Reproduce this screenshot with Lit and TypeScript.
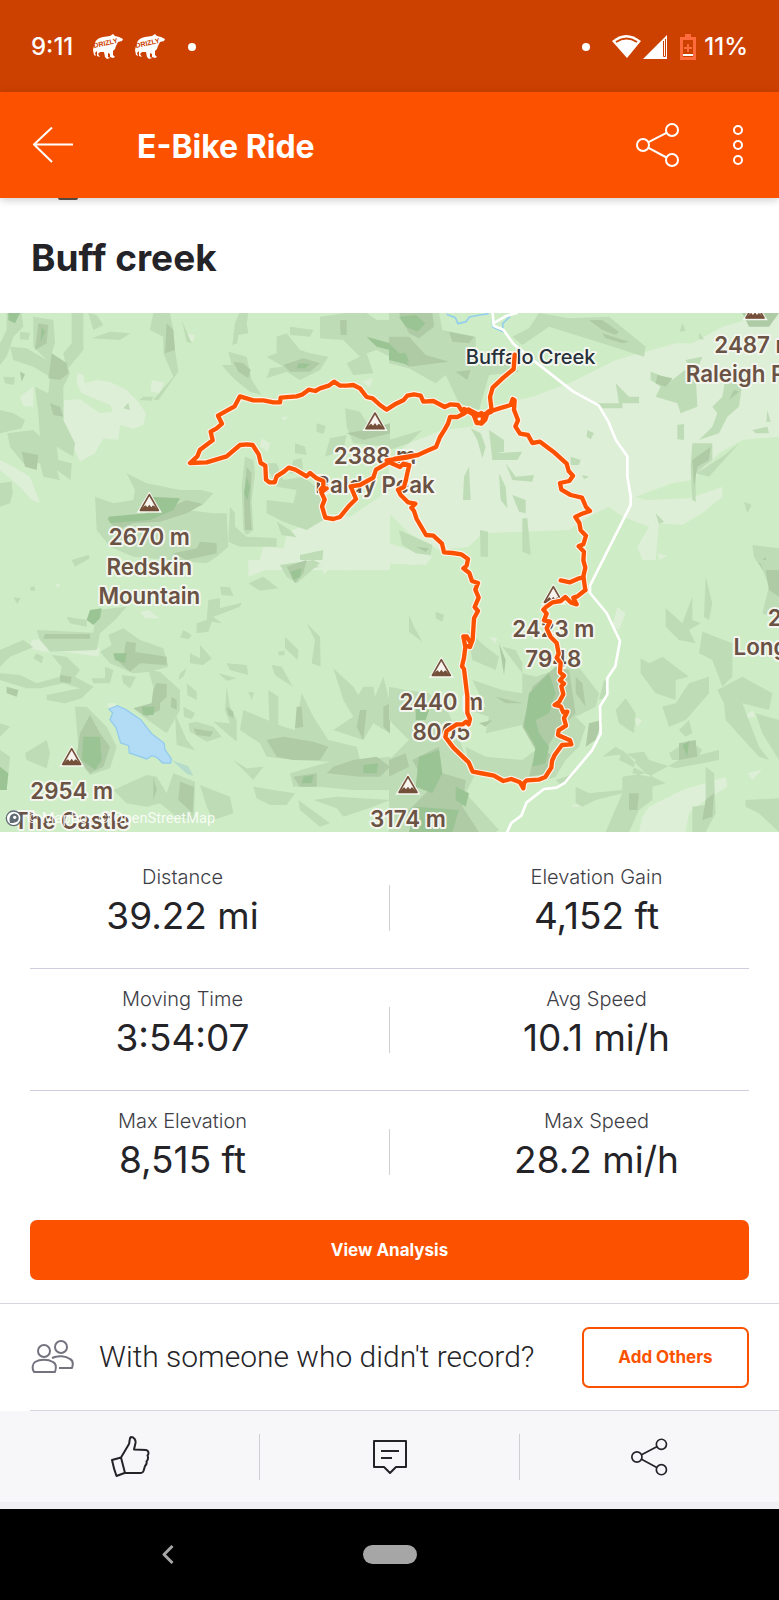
import { LitElement, html, css, svg } from "lit";
import { customElement, property } from "lit/decorators.js";

type Stat = { label: string; value: string };

const STATS: Stat[][] = [
  [
    { label: "Distance", value: "39.22 mi" },
    { label: "Elevation Gain", value: "4,152 ft" },
  ],
  [
    { label: "Moving Time", value: "3:54:07" },
    { label: "Avg Speed", value: "10.1 mi/h" },
  ],
  [
    { label: "Max Elevation", value: "8,515 ft" },
    { label: "Max Speed", value: "28.2 mi/h" },
  ],
];

const shareIcon = svg`
  <circle cx="7" cy="22" r="6"></circle>
  <circle cx="36" cy="7" r="6"></circle>
  <circle cx="36" cy="37" r="6"></circle>
  <path d="M12.500 19.200 30.500 9.800M12.500 24.800 30.500 34.500"></path>`;

/* Terrain tiles: top-left, top-right, bottom-left, bottom-right. */
type Tile = { x: number; y: number; meadow: string; shade: string; deep: string; ridge: string };

const TILES: Tile[] = [
  {
    x: 0,
    y: -39,
    meadow:
      "M232 220 250 225 255 250 290 240 330 245 380 270 410 300 438 340 430 375 400 387 360 375 355 420 310 415 285 460 240 485 215 430 190 370 192 300 240 298 300 340 338 335 330 315 245 280 230 250ZM455 240 492 248 480 280 452 275ZM60 290 100 260 100 320 70 318ZM785 415 810 430 805 455 780 440ZM125 390 140 390 190 440 165 430ZM0 480 40 500 90 530 120 610 95 600 60 560 0 510ZM560 100 585 105 580 125 562 120ZM770 810 790 740 850 745 862 700 940 660 980 640 1050 650 1170 570 1170 810ZM845 350 865 352 850 362ZM1085 245 1118 235 1110 262Z",
    shade:
      "M20 39 65 39 70 80 40 110 20 170 0 195 0 130 20 90ZM100 50 160 60 165 130 155 160 200 190 210 220 190 260 190 360 225 430 220 470 170 440 175 480 215 490 212 540 170 510 180 540 130 530 120 490 70 490 30 440 22 400 100 390 120 410 115 340 105 260 145 280 150 230 100 200 40 180 30 140 80 145 140 180 100 140ZM215 39 250 39 250 150 200 210 190 160 215 130ZM265 39 290 45 310 75 280 90ZM275 115 330 95 390 100 360 120ZM460 39 510 39 520 90 525 150 535 215 475 300 460 300 520 230 490 160 490 110 450 90ZM545 60 575 130 560 125ZM705 70 718 39 745 39 740 70 745 100 715 105 712 130 697 135ZM685 155 740 170 755 240 785 285 750 275 700 235 665 195 695 195ZM830 110 860 100 900 150 930 160 985 170 960 210 900 240 860 215 800 235 810 205 850 200 800 170 830 160ZM870 80 940 90 930 110 870 105ZM960 50 1035 39 1100 39 1130 60 1170 60 1170 170 1130 150 1100 160 1120 220 1060 225 1040 190 1080 170 1030 120 960 115ZM0 330 40 340 75 360 65 385 0 400ZM60 95 90 98 85 120 60 118ZM10 230 45 232 42 255 15 250ZM0 550 35 545 38 580 30 610 0 620ZM430 290 460 290 455 302 418 300ZM370 325 385 308 390 330ZM380 520 440 550 540 570 605 570 640 580 610 612 560 600 560 630 640 640 680 640 685 740 650 770 620 790 510 780 400 770 330 740 290 690 285 590 340 610 400 600 405 570ZM735 470 760 480 765 520 755 600 760 690 740 705 730 690 725 560ZM690 620 705 640 705 680 740 710 830 715 830 740 720 740 685 725ZM950 370 978 378 970 402 950 395ZM885 430 915 440 920 465 885 460ZM1035 325 1080 335 1120 400 1170 400 1170 440 1060 430 1040 380ZM990 415 1040 405 1030 450 975 470ZM880 480 905 475 910 520 870 520ZM795 490 830 490 850 540 910 530 960 570 970 660 920 690 850 665 800 640 800 600 880 610 890 570 830 560ZM830 665 870 690 890 712 845 705ZM215 780 265 765 270 775 225 800ZM900 765 970 750 965 800 900 810Z",
    deep:
      "M115 70 145 75 140 130 105 150ZM155 160 200 190 205 220 180 240 145 235 150 200ZM150 310 180 320 190 350 160 345ZM65 455 115 465 110 510 75 500ZM500 70 520 90 525 150 495 160ZM850 195 910 175 960 190 930 215 870 215ZM700 185 730 190 752 210 745 235 715 215ZM1020 60 1040 60 1040 105 1022 105ZM740 500 755 520 750 610 755 690 735 690 732 600ZM320 655 450 650 560 600 610 612 560 640 480 665 400 670 350 690ZM600 725 650 730 650 760 560 780 520 760 590 745ZM60 215 75 222 65 245ZM1040 400 1120 385 1170 370 1170 400 1090 420Z",
    ridge:
      "M450 590 540 595 520 630 450 660 330 670 325 650 440 640ZM740 530 750 560 742 600 732 580ZM1100 110 1170 130 1170 150 1130 140ZM895 190 930 192 915 205 890 205ZM125 80 135 95 122 125ZM25 39 60 39 45 70 25 60Z",
  },
  {
    x: 1167,
    y: -39,
    meadow:
      "M1170 39 1170 410 1060 420 990 460 910 540 850 550 740 590 770 600 900 595 1000 560 1000 590 940 640 880 675 810 670 800 780 760 780 745 740 780 680 700 650 660 620 600 650 540 690 280 700 240 740 150 750 60 700 0 640 0 480 60 430 160 390 250 380 300 320 430 290 540 250 680 180 860 130 910 130 1000 80 1090 55ZM805 760 835 768 812 780ZM0 730 130 770 110 795 0 790Z",
    shade:
      "M0 39 150 39 160 90 260 110 260 150 360 180 390 215 300 225 270 330 210 310 170 225 140 250 60 205 0 190ZM450 39 540 55 660 50 770 140 765 170 640 130 560 105 480 80 400 135 370 110 420 85ZM785 215 850 240 900 200 890 180 940 170 920 220 925 320 875 340 865 310 800 290 815 260 785 240ZM625 310 690 310 680 250 720 290 750 290 750 310 700 310 700 325 640 325ZM1010 230 1062 235 1050 320 1015 350 990 400 930 420 970 380 985 340 970 320 1000 290ZM1090 390 1135 380 1140 400 1100 400ZM865 375 885 372 885 420 865 418ZM910 430 970 430 970 480 920 520 920 605 910 600 905 500ZM920 520 1000 470 1050 430 960 530ZM880 70 890 92 872 95ZM930 98 945 118 930 118ZM1135 330 1145 365 1132 365ZM595 390 615 400 605 418 593 410ZM240 500 245 600 222 600 225 530ZM330 520 350 560 355 625 335 600ZM350 490 380 530 435 525 430 545 370 540ZM370 585 410 600 410 640 390 635ZM400 655 415 655 425 765 400 755ZM273 690 297 695 297 770 275 770ZM30 690 130 735 125 765 80 760 40 735ZM245 385 275 400 290 440 280 475 265 420ZM300 390 345 420 345 455 320 460 400 455 385 480 310 480ZM545 470 575 480 570 495 545 495ZM1065 605 1088 615 1075 640ZM800 640 825 665 810 672ZM1090 735 1170 745 1170 810 1110 795 1095 770ZM0 420 100 390 60 430 0 450ZM580 525 600 530 585 538Z",
    deep:
      "M30 39 130 39 135 80 90 115 60 100ZM0 110 60 110 110 165 180 185 60 200 0 160ZM600 60 640 60 690 95 680 105 640 90ZM640 100 720 125 700 130 650 115ZM180 95 255 110 240 130 190 125ZM805 225 850 235 830 260 800 250ZM910 480 965 440 960 480 925 500 915 560ZM1060 39 1170 39 1140 80 1080 80ZM1110 790 1130 770 1135 810 1120 810ZM200 215 245 210 235 240ZM1035 270 1050 275 1020 300ZM80 740 120 745 110 755Z",
    ridge: "M30 50 80 45 110 70 85 95 50 80ZM0 130 40 170 60 195 0 180ZM20 160 50 160 60 185 30 185Z",
  },
  {
    x: 0,
    y: 741,
    meadow:
      "M745 0 1170 0 1170 25 1040 32 1035 20 1000 15 970 45 970 20 840 15 745 50ZM95 240 150 235 180 270 300 265 295 290 200 275 130 275 90 265ZM420 155 445 150 480 175 435 175ZM320 430 350 430 335 460ZM165 70 182 72 172 85Z",
    shade:
      "M110 210 280 218 290 150 380 140 345 180 300 220 290 270 150 275 120 240ZM200 170 260 180 260 200 210 190ZM325 225 370 205 420 240 490 265 505 320 450 335 400 340 330 310 300 275 335 255ZM0 270 70 240 100 262 30 290 0 320ZM100 295 110 280 130 290 125 310ZM155 285 200 290 240 330 225 350 280 380 245 415 195 430 140 420 140 405 240 385 190 370 120 385 80 385 0 360 0 340 60 345 110 370 180 350 185 320ZM275 355 315 355 315 320 340 330 330 370 280 370ZM365 345 408 350 390 385 370 370ZM445 330 480 335 540 390 540 450 500 520 430 470 400 445 455 430 460 380ZM225 440 260 440 320 500 350 560 330 625 270 645 225 590 235 560 230 500ZM75 580 140 540 150 580 140 625 80 600ZM0 490 30 500 0 530ZM0 570 30 590 20 690 0 690ZM340 690 440 645 470 650 500 700 520 640 585 665 582 780 530 770 480 730 440 740 380 730ZM600 675 690 710 700 760 640 780 620 740ZM570 280 600 295 600 255 635 295 610 315 570 310ZM625 120 660 115 660 145 725 128 720 140 640 170 665 190 635 185 625 215 590 220 590 190 620 180ZM660 80 690 82 700 108 665 105ZM745 70 790 50 835 85 780 92ZM840 15 940 0 960 10 890 70 860 50ZM550 210 575 225 565 238 540 232ZM855 230 895 270 893 300 855 265ZM920 190 960 230 962 320 935 310 945 240ZM815 315 845 320 878 380 825 345ZM680 310 740 315 745 345 690 330ZM655 340 710 355 680 362ZM680 380 690 440 710 480 710 545 640 485 690 490 675 450ZM560 370 590 395 590 420 562 405ZM805 390 835 410 835 500 808 485ZM1000 325 1060 380 1075 405 1090 380 1120 380 1125 410 1150 350 1170 430 1170 520 1120 490 1090 540 1000 510 1060 470 1030 420ZM730 450 850 500 885 510 905 400 940 470 985 540 1070 560 1080 600 1170 590 1170 690 1060 690 960 680 880 680 870 640 990 605 880 600 800 590 780 550 720 510ZM525 460 560 540 585 570 530 555ZM565 490 590 485 640 500 665 530 620 545 570 515ZM700 600 740 625 790 620 760 660ZM760 680 820 690 885 700 860 735 810 735 770 715ZM895 720 990 790 960 800 900 750ZM940 720 1010 710 1170 720 1120 740 1030 770 1010 745ZM835 275 855 272 852 286 836 286ZM90 80 105 80 105 92 92 92ZM40 112 62 115 52 132ZM540 340 560 325 550 350 535 360ZM745 395 762 398 755 420ZM550 440 585 460 575 478 552 470Z",
    deep:
      "M135 222 270 222 270 236 130 236ZM378 245 408 248 405 285 372 282ZM345 285 400 275 500 290 500 315 420 310 390 335 350 300ZM180 345 215 350 212 370 180 365ZM470 370 500 372 500 410 480 430 480 450 440 470 400 445 455 430 460 390ZM515 410 530 420 530 450 512 440ZM240 520 270 465 300 520 330 560 310 620 270 640 230 590ZM20 380 55 390 50 410 20 400ZM680 440 700 455 700 475 685 465ZM890 440 905 440 910 500 885 505ZM800 540 850 530 940 545 985 560 960 600 880 600 830 590ZM1060 600 1130 590 1170 620 1140 650 1080 650 980 640 1000 620ZM880 650 950 640 950 680 900 680ZM1080 450 1100 450 1090 540 1070 500ZM580 505 640 515 630 530 590 525ZM540 665 582 680 578 760 535 720ZM460 650 470 690 460 720ZM1150 440 1170 430 1170 520 1150 500ZM860 20 920 0 910 40 885 70Z",
    ridge:
      "M270 150 305 145 300 175 280 195 260 180ZM340 280 380 280 375 310 345 300ZM425 440 465 440 460 465 430 465ZM250 530 300 530 305 600 285 630 245 600ZM0 620 25 640 20 690 0 690ZM1090 615 1135 610 1130 640 1090 640ZM910 650 940 645 935 670 905 670ZM870 35 905 25 900 50 880 60Z",
  },
  {
    x: 1167,
    y: 741,
    meadow:
      "M685 140 710 160 690 210 670 200ZM0 0 85 0 80 15 0 10ZM780 740 880 690 1010 650 1015 680 950 720 900 760 890 816 750 816 760 770ZM545 740 590 715 590 738ZM735 470 760 480 745 500ZM1060 475 1090 450 1100 470ZM300 230 325 235 318 250ZM1075 640 1120 628 1090 660Z",
    shade:
      "M60 165 75 200 100 245 60 215ZM140 155 165 165 160 185 140 175ZM235 210 290 260 330 290 320 330 250 300ZM340 260 380 270 400 310 400 340 440 350 500 330 560 310 630 400 620 440 560 470 590 500 570 560 530 600 500 650 440 670 350 660 240 620 230 560 290 590 400 600 440 570 420 490 290 520 300 470 240 450 290 440 250 360 340 390 400 400 400 340ZM0 380 50 390 120 400 180 460 230 590 260 640 230 700 330 810 320 816 180 816 0 816 0 600 60 540 0 480ZM830 145 880 190 910 110 910 180 935 190 900 210 920 250 870 240 830 200ZM950 50 970 130 960 180 945 170ZM1110 0 1170 0 1170 180 1120 160 1140 80ZM755 295 780 310 820 290 900 350 860 360 860 420 800 400 755 340ZM940 215 1030 250 1030 350 1000 380 970 300 930 280ZM820 440 860 430 900 370 960 350 960 400 890 480 840 500ZM985 390 1060 350 1150 400 1140 450 1060 430 1110 560 1140 600 1110 590 1010 480 1005 430ZM1100 460 1170 480 1170 600 1120 520ZM645 360 660 370 655 410 630 420ZM680 450 710 415 740 460 735 520 690 490ZM640 590 680 560 740 600 730 640 780 650 870 600 990 570 990 600 860 625 780 600 765 575ZM560 680 600 700 700 690 700 650 770 640 830 670 790 680 790 720 750 750 720 816 650 816 700 700 620 720 580 740 560 730ZM950 620 975 640 980 760 950 816 910 816 910 740 950 735ZM1070 720 1170 715 1170 816 1110 760 1070 740ZM840 580 900 540 940 570 920 600 850 600ZM870 510 900 480 910 520 890 530ZM690 600 700 570 770 640ZM500 660 560 640 520 680Z",
    deep:
      "M430 380 500 320 540 330 560 460 500 520 470 570 500 600 480 640 420 650 440 570 400 500ZM330 250 350 300 345 345ZM600 490 640 480 620 540 590 560ZM70 600 150 560 160 640 230 660 220 740 270 816 80 816 50 760 120 690ZM870 550 920 540 925 590 870 600ZM1130 30 1170 30 1170 110 1140 90ZM720 700 750 700 745 750 720 750ZM560 350 580 370 590 440 560 400ZM320 410 400 430 350 430ZM0 600 50 580 60 620 0 650ZM270 490 310 480 290 500ZM950 720 975 700 970 770 940 780Z",
    ridge:
      "M420 400 480 340 500 400 480 460 440 480 450 520 480 560 470 610 430 620 440 560 405 500ZM90 590 150 570 160 640 130 700 80 680ZM80 440 120 450 110 480 80 480ZM80 740 210 750 190 816 60 816ZM200 680 240 700 230 740 200 720ZM880 555 900 545 895 590Z",
  },
];

const ROUTES = [
  "M1544 125 1541 168 1510 194 1478 224 1470 252 1474 284 1474 294 1498 286 1532 276 1538 258 1544 262 1542 290 1554 322 1546 340 1560 362 1584 366 1597 390 1620 386 1660 416 1700 452 1706 474 1719 488 1708 504 1680 510 1684 530 1712 546 1746 554 1758 582 1770 594 1742 604 1726 612 1738 630 1742 652 1758 668 1750 694 1736 700 1752 716 1750 742 1756 764 1750 790 1756 831",
  "M1682 802 1710 808 1734 797 1750 793",
  "M1756 831 1732 850 1720 854 1730 874 1712 868 1696 852 1682 864 1658 868 1638 882 1630 890 1640 902 1632 922 1650 926 1640 946 1652 972 1670 990 1676 1022 1670 1034 1682 1050 1680 1078 1692 1088 1680 1102 1692 1112 1684 1120 1690 1144 1678 1166 1664 1176 1682 1180 1690 1198 1702 1196 1692 1216 1698 1238 1676 1252 1674 1266 1696 1276 1710 1282 1714 1294 1686 1296 1664 1326 1656 1344 1654 1364 1636 1392 1616 1400 1580 1402 1572 1410 1570 1426 1560 1408 1534 1398 1510 1404 1482 1388 1440 1380 1418 1376 1406 1348 1360 1304 1336 1272 1340 1254 1370 1234 1388 1234 1398 1226 1406 1234 1410 1218 1402 1200 1402 1150 1392 1068 1386 1060 1392 1034 1396 1002 1390 970 1400 970 1412 990 1410 1002 1396 998M1410 1002 1418 980 1422 916 1434 894 1424 882 1436 854 1426 830 1434 810 1416 804 1408 780 1390 766 1400 758 1404 738 1384 724 1358 720 1332 718 1326 692 1300 668 1278 666 1250 618 1242 594 1234 584 1246 572 1224 568 1202 546 1194 530 1212 522 1218 500 1222 480 1228 456 1210 452 1200 462 1168 448 1160 442 1190 438 1220 434 1254 426 1280 414 1308 402 1320 372 1334 350 1344 332 1350 312 1372 312 1392 302 1406 290 1386 294 1374 276 1352 274 1334 282 1300 264 1270 266 1262 248 1242 244 1222 248 1210 262 1188 272 1160 290 1140 276 1118 256 1100 252 1080 226 1060 216 1040 218 1020 218 1002 206 986 218 960 226 946 234 926 230 908 244 890 250 842 254 840 268 820 268 790 262 760 262 720 250 704 280 682 292 654 308 666 332 650 346 632 356 638 382 600 410 592 430 570 450 620 448 680 430 720 396 742 394 758 396 776 424 782 450 796 458 798 500 808 508 824 508 830 490 852 476 866 464 886 470 920 490 930 480 950 496 970 504 970 520 962 530 980 526 964 538 974 560 966 580 976 614 1000 618 1020 612 1046 580 1068 558 1052 520 1080 516 1120 494 1128 470 1160 452 1182 438 1254 426",
  "M1392 288 1420 304 1430 328 1444 332 1456 320 1464 296 1476 290M1444 300 1424 314 1430 330 1446 328 1452 306 1474 296M1406 290 1442 308 1474 294",
];

type Peak = { x: number; y: number; lines: string[] };

/* x, y: tip of the peak symbol. */
const PEAKS: Peak[] = [
  { x: 448, y: 547, lines: ["2670 m", "Redskin", "Mountain"] },
  { x: 1125, y: 302, lines: ["2388 m", "Baldy Peak"] },
  { x: 2265, y: -30, lines: ["2487 m", "Raleigh Peak"] },
  { x: 1660, y: 823, lines: ["2423 m", "7948"] },
  { x: 1324, y: 1042, lines: ["2440 m", "8005"] },
  { x: 215, y: 1309, lines: ["2954 m", "The Castle"] },
  { x: 1224, y: 1393, lines: ["3174 m"] },
  { x: 2425, y: 789, lines: ["2750 m", "Long Scraggy"] },
];

@customElement("ride-map")
export class RideMap extends LitElement {
  static styles = css`
    :host {
      display: block;
    }
    .map {
      display: block;
      width: 100%;
      height: auto;
      background: #ceecc5;
      font-family: Inter, "Liberation Sans", sans-serif;
    }
    .meadow {
      fill: #ddefd6;
    }
    .shade {
      fill: #bedcb6;
    }
    .deep {
      fill: #aecba6;
    }
    .ridge {
      fill: #9bc494;
    }
    .lake {
      fill: #b2dcf6;
      stroke: #94ccec;
      stroke-width: 4;
    }
    .marsh {
      fill: #b5dccb;
    }
    .river {
      fill: none;
      stroke: #94cfee;
      stroke-width: 5;
    }
    .road,
    .halo,
    .route {
      fill: none;
      stroke-linecap: round;
      stroke-linejoin: round;
    }
    .road {
      stroke: #ffffff;
      stroke-width: 8;
    }
    .halo {
      stroke: #fff3ea;
      stroke-width: 20;
    }
    .route {
      stroke: #fc5200;
      stroke-width: 13;
    }
    .name {
      fill: #6a5244;
      font-size: 67px;
      font-weight: 600;
      text-anchor: middle;
      stroke: #f3f6ee;
      stroke-width: 12;
      stroke-linejoin: round;
      paint-order: stroke;
    }
    .town {
      fill: #25303a;
      font-size: 60px;
      font-weight: 500;
    }
    .peak-halo {
      fill: #f3f6ee;
    }
    .peak-edge {
      fill: #f7f4ef;
      stroke: #74503a;
      stroke-width: 5;
      stroke-linejoin: round;
    }
    .peak-base {
      fill: #74503a;
    }
    .credit {
      fill: #ffffff;
      fill-opacity: 0.85;
      font-family: Roboto, sans-serif;
      font-size: 44px;
    }
  `;

  render() {
    return html`
      <svg class="map" viewBox="0 0 2337 1557" role="img" aria-label="Ride route map">
        ${TILES.map(
          (t) => svg`<g transform="translate(${t.x} ${t.y})">
            <path class="meadow" d=${t.meadow}></path>
            <path class="shade" d=${t.shade}></path>
            <path class="deep" d=${t.deep}></path>
            <path class="ridge" d=${t.ridge}></path>
          </g>`
        )}
        <path class="lake" d="M327 1188 352 1178 378 1190 422 1220 455 1262 492 1290 495 1310 514 1338 512 1350 488 1350 472 1334 456 1328 440 1338 388 1320 386 1298 362 1290 348 1244 330 1220 338 1200Z"></path>
        <path class="marsh" d="M516 1342 565 1360 580 1388 562 1384Z"></path>
        <path class="river" d="M1340 4 1366 14 1374 32 1398 26 1408 12 1440 6 1466 2M1478 0 1478 42 1510 56 1508 32 1530 10"></path>
        <path class="road" d="M1478 0 1481 38 1510 50 1540 92 1600 142 1720 236 1796 277 1825 326 1848 382 1882 430 1882 490 1892 550 1892 576 1770 818 1770 840 1820 900 1860 984 1846 1060 1822 1096 1822 1144 1800 1180 1802 1262 1776 1312 1694 1410 1670 1424 1632 1428 1580 1468 1564 1508 1534 1530 1520 1560M1485 28 1520 8 1550 0"></path>
        <text class="name town" x="1592" y="153">Buffalo Creek</text>
        ${PEAKS.map(
          (p) => svg`<g transform="translate(${p.x} ${p.y})">
            <path class="peak-halo" d="M0-12 38 52H-38Z"></path>
            <path class="peak-edge" d="M0-2 27 45H-27Z"></path>
            <path class="peak-base" d="M-16 33-11 30-6 36 0 28 6 36 11 30 16 33 28 46H-28Z"></path>
            ${p.lines.map((line, i) => svg`<text class="name" x="0" y=${150 + i * 88}>${line}</text>`)}
          </g>`
        )}
        <circle cx="41" cy="1516" r="22" fill="#ffffff" stroke="#5f6c74" stroke-width="4"></circle>
        <path d="M30 1530c-5-18 4-30 16-28 12 2 14 20 3 25-6 3-14 3-19 3Z" fill="#5f6c74"></path>
        <circle cx="44" cy="1513" r="5" fill="#ffffff"></circle>
        <text class="credit" x="80" y="1530">© Mapbox © OpenStreetMap</text>
        ${ROUTES.map((d) => svg`<path class="halo" d=${d}></path>`)}
        ${ROUTES.map((d) => svg`<path class="route" d=${d}></path>`)}
      </svg>
    `;
  }
}

@customElement("stat-cell")
export class StatCell extends LitElement {
  @property() label = "";
  @property() value = "";

  static styles = css`
    :host {
      display: flex;
      flex-direction: column;
      align-items: center;
    }
    .label {
      font-size: 20px;
      line-height: 30px;
      font-weight: 300;
      color: #3e3e46;
    }
    .value {
      font-size: 37px;
      line-height: 48px;
      color: #242428;
    }
  `;

  render() {
    return html`<span class="label">${this.label}</span><span class="value">${this.value}</span>`;
  }
}

@customElement("app-root")
export class AppRoot extends LitElement {
  static styles = css`
    :host {
      display: flex;
      flex-direction: column;
      min-height: 100vh;
      background: #ffffff;
      color: #242428;
      font-family: Inter, "Liberation Sans", sans-serif;
    }
    button {
      font: inherit;
      color: inherit;
      background: none;
      border: 0;
      padding: 0;
      cursor: pointer;
    }
    svg {
      display: block;
    }
    .line {
      fill: none;
      stroke: currentColor;
      stroke-width: 2;
      stroke-linejoin: round;
    }
    .status {
      display: flex;
      align-items: center;
      height: 92px;
      padding: 2px 31px 0;
      box-sizing: border-box;
      background: #cc4100;
      color: #ffffff;
      font-size: 24px;
      font-weight: 500;
      line-height: 32px;
    }
    .bears {
      display: flex;
      gap: 12px;
      margin-left: 20px;
    }
    .brand {
      font-family: "Liberation Sans", sans-serif;
      font-size: 7px;
      font-weight: 700;
    }
    .dot {
      width: 8px;
      height: 8px;
      border-radius: 50%;
      background: #ffffff;
    }
    .status-left {
      margin-left: 23px;
    }
    .status-right {
      margin-left: auto;
      margin-right: 22px;
    }
    .battery {
      margin: 0 8px 0 12px;
    }
    .appbar {
      display: flex;
      align-items: center;
      height: 106px;
      padding: 0 35px 0 31px;
      box-sizing: border-box;
      background: #fc5200;
      color: #ffffff;
      box-shadow: 0 2px 8px rgba(0, 0, 0, 0.2);
      position: relative;
    }
    .heading {
      flex: 1;
      margin: 0 0 0 63px;
      padding-top: 4px;
      font-size: 32px;
      line-height: 40px;
      font-weight: 700;
    }
    .more {
      margin-left: 53px;
    }
    .peek {
      width: 20px;
      height: 2px;
      margin-left: 58px;
      border-radius: 0 0 10px 10px;
      background: #55483f;
      position: relative;
    }
    .title {
      margin: 0;
      padding: 34px 31px 31px;
      font-size: 37px;
      line-height: 48px;
      font-weight: 700;
    }
    .stats {
      padding: 0 30px;
    }
    .stat-row {
      display: grid;
      grid-template-columns: 1fr 1px 1fr;
      height: 122px;
      padding-top: 15px;
      box-sizing: border-box;
      border-bottom: 1px solid #d0cfdf;
    }
    .stat-row:first-child {
      height: 137px;
      padding-top: 30px;
    }
    .stat-row:last-child {
      border-bottom: 0;
    }
    .split {
      width: 1px;
      height: 46px;
      background: #d0d0d4;
    }
    .stat-row .split {
      margin-top: 23px;
    }
    .left {
      padding-right: 54px;
    }
    .right {
      padding-left: 54px;
    }
    .cta {
      display: grid;
      padding: 7px 30px 23px;
    }
    .primary {
      height: 60px;
      border-radius: 7px;
      background: #fc5200;
      color: #ffffff;
      font-size: 17px;
      font-weight: 700;
    }
    .others {
      display: flex;
      align-items: center;
      height: 107px;
      padding: 0 30px;
      box-sizing: border-box;
      border-top: 1px solid #d6d5e0;
      color: #73737f;
    }
    .question {
      flex: 1;
      margin: 0 0 0 24px;
      font-family: Roboto, sans-serif;
      font-size: 30px;
      font-weight: 300;
      line-height: 40px;
      color: #242428;
    }
    .outline {
      width: 167px;
      height: 61px;
      box-sizing: border-box;
      border: 2px solid #fc5200;
      border-radius: 7px;
      color: #fc5200;
      font-size: 17px;
      font-weight: 700;
    }
    .actions {
      display: grid;
      grid-template-columns: 1fr 1px 1fr 1px 1fr;
      align-items: center;
      height: 98px;
      box-sizing: border-box;
      border-bottom: 7px solid #efeff4;
      background: #f7f7fa;
    }
    .rule {
      height: 1px;
      padding-left: 30px;
      background: #d6d5e0 content-box;
    }
    .actions button {
      justify-self: center;
    }
    .nav {
      display: grid;
      grid-template-columns: 1fr auto 1fr;
      align-items: center;
      flex: 1;
      min-height: 91px;
      background: #000000;
      color: #a6a6a6;
    }
    .nav-back {
      justify-self: center;
      margin-right: 26px;
    }
    .home {
      width: 54px;
      height: 19px;
      border-radius: 10px;
      background: #a6a6a6;
    }
  `;

  private bear() {
    return html`<svg width="30" height="26" viewBox="0 0 30 26" aria-hidden="true">
      <path
        fill="#ffffff"
        d="M1 12C2 6 5 4 10 3L17 2 20 0 22 2 26 3 30 5 29 7 25 8 23 12 22 15 20 17 20 21 22 23 20 24 17 23 17 20 15 19 15 23 17 24 14 25 12 23 11 18 7 18 5 20 7 23 4 22 4 17 2 19 3 22 1 21 0 16Z"
      ></path>
      <text class="brand" x="1" y="14" fill="#cc4100" transform="rotate(-12 1 14)">DRIZLY</text>
    </svg>`;
  }

  render() {
    return html`
      <div class="status">
        <span>9:11</span>
        <span class="bears">${this.bear()}${this.bear()}</span>
        <span class="dot status-left"></span>
        <span class="dot status-right"></span>
        <svg width="56" height="26" viewBox="0 0 56 26" aria-hidden="true">
          <path fill="#ffffff" d="M0 7Q14-5 29 7L15 24Z"></path>
          <path fill="none" stroke="#cc4100" stroke-width="2" d="M4 8Q14.500 1 25 8"></path>
          <path fill="#ffffff" d="M31 25 55 1V25Z"></path>
          <path fill="none" stroke="#cc4100" stroke-width="1" d="M51.500 7V22.500H53.500V5"></path>
        </svg>
        <svg class="battery" width="16" height="26" viewBox="0 0 16 26" aria-hidden="true">
          <path fill="#ff6b3d" d="M5 0H11V3H16V26H0V3H5Z"></path>
          <path fill="#cc4100" d="M3 6H13V23H3Z"></path>
          <path fill="#ff6b3d" d="M7 10H9V13H12V15H9V18H7V15H4V13H7Z"></path>
          <path fill="#ffffff" d="M3 20H13V22H3Z"></path>
        </svg>
        <span>11%</span>
      </div>

      <header class="appbar">
        <button aria-label="Back">
          <svg class="line" width="43" height="36" viewBox="0 0 43 36">
            <path d="M42 17.500H3M21 0.500 3 17.500 21 35"></path>
          </svg>
        </button>
        <h1 class="heading">E-Bike Ride</h1>
        <button aria-label="Share">
          <svg class="line" width="43" height="44" viewBox="0 0 43 44">${shareIcon}</svg>
        </button>
        <button class="more" aria-label="More options">
          <svg class="line" width="12" height="42" viewBox="0 0 12 42">
            <circle cx="6" cy="6" r="4"></circle>
            <circle cx="6" cy="21" r="4"></circle>
            <circle cx="6" cy="36" r="4"></circle>
          </svg>
        </button>
      </header>

      <main>
        <div class="peek"></div>
        <h2 class="title">Buff creek</h2>
        <ride-map></ride-map>
        <section class="stats" aria-label="Ride statistics">
          ${STATS.map(
            ([a, b]) => html`<div class="stat-row">
              <stat-cell class="left" .label=${a.label} .value=${a.value}></stat-cell>
              <span class="split"></span>
              <stat-cell class="right" .label=${b.label} .value=${b.value}></stat-cell>
            </div>`
          )}
        </section>
        <div class="cta"><button class="primary">View Analysis</button></div>
        <section class="others">
          <svg class="line" width="45" height="36" viewBox="0 0 45 36" aria-hidden="true">
            <circle cx="14" cy="12" r="6"></circle>
            <circle cx="31" cy="8" r="6"></circle>
            <path d="M4 33C2 30 2 25 5 23 10 20 18 20 23 23 27 25 26 30 25 33Z"></path>
            <path d="M22 19C28 16 36 17 40 20 44 22 43 26 42 29H29"></path>
          </svg>
          <p class="question">With someone who didn't record?</p>
          <button class="outline">Add Others</button>
        </section>
        <div class="rule"></div>
      </main>

      <div class="actions">
        <button aria-label="Give kudos">
          <svg class="line" width="40" height="42" viewBox="0 0 40 42">
            <path
              d="M2 24 11 21.500 19 8C20 5 19 2 21 1 24 1 26 4 25.500 7L24 13.500 36 14C39 14.500 39 18 37.500 19.500 38.500 22 38 24 36.500 25.500 37 27 36 29 35 30L33.500 35C33 36.500 32 37 31 37H14.500L6.500 40C5 36 3 29 2 24ZM11 21.500 15 37"
            ></path>
          </svg>
        </button>
        <span class="split"></span>
        <button aria-label="Comment">
          <svg class="line" width="36" height="36" viewBox="0 0 36 36">
            <path d="M2 2H34V28H24L18 34 12 28H2ZM9 12H27M9 19H20"></path>
          </svg>
        </button>
        <span class="split"></span>
        <button aria-label="Share activity">
          <svg class="line" width="38" height="40" viewBox="0 0 45 44">${shareIcon}</svg>
        </button>
      </div>

      <nav class="nav">
        <button class="nav-back" aria-label="System back">
          <svg class="line" width="12" height="19" viewBox="0 0 12 19">
            <path d="M10.500 1 2 9.500 10.500 18" stroke-width="3"></path>
          </svg>
        </button>
        <button class="home" aria-label="Home"></button>
      </nav>
    `;
  }
}
